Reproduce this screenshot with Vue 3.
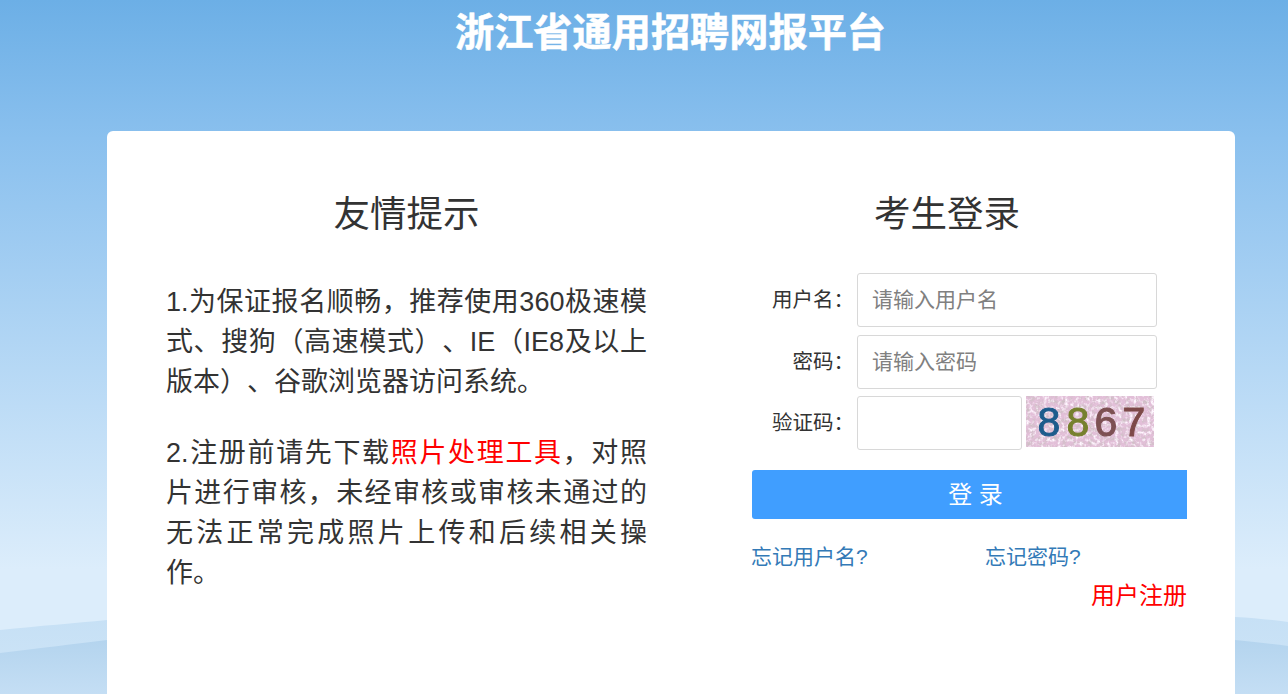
<template>
  <div class="page">
    <svg class="waves" width="1288" height="694" viewBox="0 0 1288 694" aria-hidden="true">
      <defs>
        <linearGradient id="w1" x1="0" y1="0" x2="0" y2="1">
          <stop offset="0" stop-color="#c6e0f5" />
          <stop offset="1" stop-color="#cfe5f7" />
        </linearGradient>
        <linearGradient id="w2" x1="0" y1="0" x2="0" y2="1">
          <stop offset="0" stop-color="#b4d4ee" />
          <stop offset="1" stop-color="#c4def4" />
        </linearGradient>
      </defs>
      <path d="M0 630 C40 626 75 623 107 620 L1235 617 C1255 618 1272 620 1288 622 V694 H0 Z" fill="url(#w1)" />
      <path d="M0 653 C40 648 75 644 107 640 L1235 640 C1255 642 1272 644 1288 646 V694 H0 Z" fill="url(#w2)" />
    </svg>
    <h1 class="title">浙江省通用招聘网报平台</h1>
    <main class="card">
      <section class="notice">
        <h2 class="heading">友情提示</h2>
        <p class="para">1.为保证报名顺畅，推荐使用360极速模式、搜狗（高速模式）、IE（IE8及以上版本）、谷歌浏览器访问系统。</p>
        <p class="para">2.注册前请先下载<span class="red">照片处理工具</span>，对照片进行审核，未经审核或审核未通过的无法正常完成照片上传和后续相关操作。</p>
      </section>
      <section class="login">
        <h2 class="heading">考生登录</h2>
        <form class="form" @submit.prevent>
          <div class="row">
            <label class="label">用户名：</label>
            <input class="input" placeholder="请输入用户名" />
          </div>
          <div class="row">
            <label class="label">密码：</label>
            <input class="input" placeholder="请输入密码" />
          </div>
          <div class="row row-code">
            <label class="label">验证码：</label>
            <input class="input input-code" />
            <svg class="captcha" width="128" height="51" viewBox="0 0 128 51" role="img" aria-label="验证码图片">
              <defs>
                <filter id="noise" x="0" y="0" width="100%" height="100%">
                  <feTurbulence type="fractalNoise" baseFrequency="0.22" numOctaves="3" seed="7" />
                  <feColorMatrix type="matrix" values="0 0 0 0 0.62  0 0 0 0 0.52  0 0 0 0 0.56  0 0 0 3 -1.35" />
                </filter>
                <filter id="noise2" x="0" y="0" width="100%" height="100%">
                  <feTurbulence type="fractalNoise" baseFrequency="0.28" numOctaves="3" seed="23" />
                  <feColorMatrix type="matrix" values="0 0 0 0 1  0 0 0 0 0.93  0 0 0 0 1  0 0 0 3 -1.4" />
                </filter>
                <filter id="soft"><feGaussianBlur stdDeviation="0.7" /></filter>
              </defs>
              <rect width="128" height="51" fill="#e2bfd8" />
              <rect width="128" height="51" filter="url(#noise)" />
              <rect width="128" height="51" filter="url(#noise2)" />
              <g class="digits" filter="url(#soft)">
                <text x="23" y="40" text-anchor="middle" fill="#1f5c8c" stroke="#1f5c8c">8</text>
                <text x="52" y="40" text-anchor="middle" fill="#77802f" stroke="#77802f">8</text>
                <text x="80" y="40" text-anchor="middle" fill="#7d5153" stroke="#7d5153">6</text>
                <text x="108" y="40" text-anchor="middle" fill="#7d4a48" stroke="#7d4a48">7</text>
              </g>
            </svg>
          </div>
          <button class="submit" type="button">登 录</button>
          <div class="links">
            <a class="link">忘记用户名?</a>
            <a class="link">忘记密码?</a>
          </div>
          <div class="register"><a class="reg-link">用户注册</a></div>
        </form>
      </section>
    </main>
  </div>
</template>

<script setup>
</script>

<style>
html, body { margin: 0; padding: 0; overflow: hidden; }
</style>

<style scoped>
.page {
  position: relative;
  width: 1288px;
  height: 694px;
  overflow: hidden;
  background: linear-gradient(180deg, #6cafe6 0%, #8ac0ee 20%, #dcedfb 82%, #dcedfb 100%);
  font-family: "Liberation Sans", "Noto Sans CJK SC", sans-serif;
  color: #333;
  text-spacing-trim: space-all;
}
.waves { position: absolute; left: 0; top: 0; }
.title {
  position: relative;
  margin: 0;
  height: 131px;
  padding-top: 8px;
  padding-left: 53px;
  box-sizing: border-box;
  text-align: center;
  font-size: 39.2px;
  line-height: 50px;
  font-weight: 700;
  color: #fff;
  -webkit-text-stroke: 0.5px #fff;
}
.card {
  position: relative;
  width: 1128px;
  height: 600px;
  margin-left: 107px;
  background: #fff;
  border-radius: 6px;
  display: flex;
}
.notice { width: 481px; margin-left: 59px; }
.login { width: 435px; margin-left: 105px; }
.heading {
  margin: 0;
  padding-top: 59px;
  text-align: center;
  font-size: 36.5px;
  line-height: 50px;
  font-weight: 400;
  color: #333;
}
.login .heading { padding-right: 45px; }
.para {
  margin: 0 0 31px;
  font-size: 27px;
  line-height: 40px;
  text-align: justify;
  color: #333;
}
.heading + .para { margin-top: 42px; }
.red { color: #f00; }
.form { margin-top: 33px; }
.row { display: flex; align-items: flex-start; margin-bottom: 8px; height: 54px; }
.row-code { margin-bottom: 20px; margin-top: -1px; }
.label {
  width: 102px;
  margin-right: 3px;
  line-height: 54px;
  font-size: 20.5px;
  text-align: right;
  color: #333;
  white-space: nowrap;
}
.input {
  width: 300px;
  height: 54px;
  box-sizing: border-box;
  border: 1px solid #d8d8d8;
  border-radius: 3px;
  padding: 0 14px;
  font: inherit;
  font-size: 21px;
  background: #fff;
  outline: none;
}
.input::placeholder { color: #808080; opacity: 1; }
.input-code { width: 165px; }
.captcha { margin-left: 4px; display: block; }
.digits { font-family: "Liberation Sans", sans-serif; font-size: 41px; font-weight: 400; stroke-width: 1px; }
.submit {
  display: block;
  width: 435px;
  height: 49px;
  border: 0;
  border-radius: 3px 0 0 3px;
  background: #409eff;
  color: #fff;
  font: inherit;
  font-size: 24px;
  padding: 0 0 5px 12px;
}
.links { display: flex; margin: 23px 0 0 -1px; line-height: 30px; }
.link { flex: none; width: 234px; font-size: 21px; color: #337ab7; }
.register { text-align: right; margin-top: 9px; line-height: 30px; }
.reg-link { font-size: 24px; color: #f00; }
</style>
